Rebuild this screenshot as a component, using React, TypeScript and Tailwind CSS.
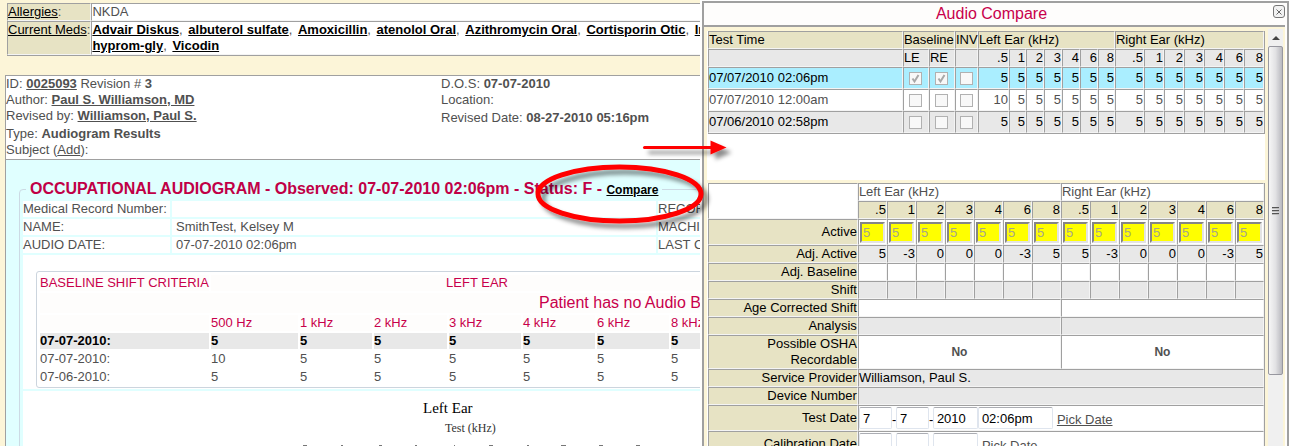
import React from "react";

const meds = [
  ["Advair Diskus", "albuterol sulfate", "Amoxicillin", "atenolol Oral", "Azithromycin Oral", "Cortisporin Otic", "In"],
  ["hyprom-gly", "Vicodin"],
];

const freqs = [".5", "1", "2", "3", "4", "6", "8"];
const bothEars = [...freqs, ...freqs];

const shiftRows = [
  { date: "07-07-2010:", values: ["5", "5", "5", "5", "5", "5", "5"], current: true },
  { date: "07-07-2010:", values: ["10", "5", "5", "5", "5", "5", "5"], current: false },
  { date: "07-06-2010:", values: ["5", "5", "5", "5", "5", "5", "5"], current: false },
];

const tests = [
  { time: "07/07/2010 02:06pm", baseline: true, first: "5", look: "bg-[#aaeeff] text-black" },
  { time: "07/07/2010 12:00am", baseline: false, first: "10", look: "bg-white text-[#505050]" },
  { time: "07/06/2010 02:58pm", baseline: false, first: "5", look: "bg-[#e8e8e8] text-black" },
];

const adjusted = ["5", "-3", "0", "0", "0", "-3", "5", "5", "-3", "0", "0", "0", "-3", "5"];

const cell = "border border-t-[#a0a0a0] border-l-[#a0a0a0] border-r-[#f4f4f4] border-b-[#f4f4f4] p-0 font-normal";
const label = cell + " bg-[#e7e3c4] text-right";
const table = "w-full table-fixed border-separate border-spacing-0 border-r border-[#a0a0a0] text-black";
const field =
  "h-[22px] rounded-[2px] border border-[#dfe5ee] border-t-[#abadb3] bg-white px-[3px] text-[13px] text-black outline-none";

function Meds({ names }: { names: string[] }) {
  return (
    <>
      {names.map((name, i) => (
        <React.Fragment key={name}>
          <a href="#" className="font-bold text-black underline">
            {name}
          </a>
          {i < names.length - 1 && <span className="mr-[2px]">, </span>}
        </React.Fragment>
      ))}
    </>
  );
}

function PatientHeader() {
  return (
    <table className="mt-[3px] ml-[7px] border-separate border-spacing-0 border-b border-[#a0a0a0] whitespace-nowrap">
      <tbody>
        <tr>
          <th className={cell + " w-[84px] bg-[#e7e3c4] text-left"}>
            <a href="#" className="text-black underline">Allergies</a>:
          </th>
          <td className={cell + " min-w-[700px] bg-white"}>NKDA</td>
        </tr>
        <tr>
          <th className={cell + " bg-[#e7e3c4] text-left align-top"}>
            <a href="#" className="text-black underline">Current Meds</a>:
          </th>
          <td className={cell + " bg-white"}>
            <Meds names={meds[0]} />
            <br />
            <Meds names={meds[1]} />
          </td>
        </tr>
      </tbody>
    </table>
  );
}

function RecordInfo() {
  return (
    <section className="grid grid-cols-[435px_1fr] border-y border-[#a0a0a0] bg-white pb-px whitespace-nowrap">
      <div>
        <p>ID: <a href="#" className="font-bold underline">0025093</a> Revision # <b>3</b></p>
        <p>Author: <a href="#" className="font-bold underline">Paul S. Williamson, MD</a></p>
        <p>Revised by: <a href="#" className="font-bold underline">Williamson, Paul S.</a></p>
        <p className="mt-[2px]">Type: <b>Audiogram Results</b></p>
        <p>Subject (<a href="#" className="underline">Add</a>):</p>
      </div>
      <div>
        <p>D.O.S: <b>07-07-2010</b></p>
        <p>Location:</p>
        <p className="mt-[2px]">Revised Date: <b>08-27-2010 05:16pm</b></p>
      </div>
    </section>
  );
}

function ShiftCriteria() {
  const tint = "bg-[#fefdfc] font-normal text-[#c8004b] p-0";
  return (
    <div className="w-max rounded-[3px] border border-[#ccd5de] px-px pt-px">
      <table className="w-[707px] table-fixed border-separate border-spacing-[2px] text-left">
        <colgroup>
          <col className="w-[169px]" />
          <col className="w-[87px]" />
          <col className="w-[72px]" />
          <col className="w-[73px]" />
          <col className="w-[72px]" />
          <col className="w-[72px]" />
          <col className="w-[72px]" />
          <col className="w-[72px]" />
        </colgroup>
        <thead>
          <tr>
            <th className={tint}>BASELINE SHIFT CRITERIA</th>
            <th colSpan={7} className={tint + " text-center"}>LEFT EAR</th>
          </tr>
          <tr>
            <th colSpan={8} className={tint + " pl-[499px] text-base leading-5"}>Patient has no Audio Baseline</th>
          </tr>
          <tr>
            <th className={tint}></th>
            {["500 Hz", "1 kHz", "2 kHz", "3 kHz", "4 kHz", "6 kHz", "8 kHz"].map((h) => (
              <th key={h} className={tint}>{h}</th>
            ))}
          </tr>
        </thead>
        <tbody>
          {shiftRows.map((row, i) => (
            <tr key={i} className={row.current ? "bg-[#e8e8e8] font-bold text-black" : ""}>
              <td className="p-0">{row.date}</td>
              {row.values.map((v, j) => (
                <td key={j} className="p-0">{v}</td>
              ))}
            </tr>
          ))}
        </tbody>
      </table>
    </div>
  );
}

function Audiogram() {
  const rows = [
    ["Medical Record Number:", "", "RECORD"],
    ["NAME:", "SmithTest, Kelsey M", "MACHINE"],
    ["AUDIO DATE:", "07-07-2010 02:06pm", "LAST CAL"],
  ];
  return (
    <section className="flex-1 bg-[#e0ffff] pt-[19px] pl-[13px] whitespace-nowrap">
      <fieldset className="w-max min-w-full rounded-[4px] border border-[#ccdae4] pt-[2px] pl-[3px]">
        <legend className="ml-[3px] px-1 text-base leading-5 font-bold text-[#c00046]">
          OCCUPATIONAL AUDIOGRAM - Observed: 07-07-2010 02:06pm - Status: F -{" "}
          <a href="#" className="text-xs text-black underline">Compare</a>
        </legend>
        <div className="grid grid-cols-[147px_484px_1fr] gap-[2px] *:bg-white">
          {rows.flat().map((text, i) => (
            <div key={i} className={i % 3 === 1 ? "h-4 pl-1" : "h-4"}>{text}</div>
          ))}
        </div>
        <div className="mt-[2px] bg-white pt-4 pb-px pl-[13px]">
          <ShiftCriteria />
        </div>
        <div className="mt-[2px] h-[400px] bg-white pt-[9px] font-['Liberation_Serif',serif]">
          <h2 className="pl-[400px] text-[15px] leading-4 text-black">Left Ear</h2>
          <p className="mt-1 pl-[422px] text-xs leading-4 text-[#333]">Test (kHz)</p>
          <svg width="360" height="2" className="mt-[9px] ml-[277px] block" aria-hidden="true">
            <path
              d="M3 .5h4M41 .5h2M79 .5h3M115 .5h2M154 .5h1M189 .5h4M227 .5h2M261 .5h5M299 .5h4M336 .5h4"
              stroke="#777"
            />
          </svg>
        </div>
      </fieldset>
    </section>
  );
}

function Tick({ name, checked }: { name: string; checked: boolean }) {
  return (
    <span className="mx-auto grid size-[13px]">
      <input
        type="checkbox"
        aria-label={name}
        checked={checked}
        readOnly
        disabled
        className="col-start-1 row-start-1 size-[13px] appearance-none border border-[#b1b1b1] bg-[#f8f8f8]"
      />
      {checked && (
        <svg viewBox="0 0 13 13" className="z-10 col-start-1 row-start-1 size-[13px]" aria-hidden="true">
          <path d="M3.5 6.5 5.5 9.5 9.5 3" fill="none" stroke="#a8a8a8" strokeWidth="2" />
        </svg>
      )}
    </span>
  );
}

function TestList() {
  return (
    <table className={table + " border-b"}>
      <colgroup>
        <col />
        <col className="w-[26px]" />
        <col className="w-[26px]" />
        <col className="w-[23px]" />
        <col className="w-[31px]" />
        <col className="w-[17px]" />
        <col className="w-[18px]" />
        <col className="w-[18px]" />
        <col className="w-[18px]" />
        <col className="w-[18px]" />
        <col className="w-[17px]" />
        <col className="w-[29px]" />
        <col className="w-[20px]" />
        <col className="w-[20px]" />
        <col className="w-[20px]" />
        <col className="w-[20px]" />
        <col className="w-[20px]" />
        <col className="w-[20px]" />
      </colgroup>
      <thead>
        <tr className="bg-[#e7e3c4] text-left whitespace-nowrap">
          <th className={cell}>Test Time</th>
          <th colSpan={2} className={cell}>Baseline</th>
          <th className={cell}>INV</th>
          <th colSpan={7} className={cell}>Left Ear (kHz)</th>
          <th colSpan={7} className={cell}>Right Ear (kHz)</th>
        </tr>
        <tr className="bg-[#e8e8e8]">
          <th className={cell}></th>
          <th className={cell + " text-left"}>LE</th>
          <th className={cell + " text-left"}>RE</th>
          <th className={cell}></th>
          {bothEars.map((f, i) => (
            <th key={i} className={cell + " text-right"}>{f}</th>
          ))}
        </tr>
      </thead>
      <tbody>
        {tests.map((t) => (
          <tr key={t.time} className={t.look}>
            <td className={cell + " h-[22px]"}>{t.time}</td>
            <td className={cell}><Tick name={"Left ear baseline " + t.time} checked={t.baseline} /></td>
            <td className={cell}><Tick name={"Right ear baseline " + t.time} checked={t.baseline} /></td>
            <td className={cell}><Tick name={"Invalid " + t.time} checked={false} /></td>
            {bothEars.map((_, i) => (
              <td key={i} className={cell + " text-right"}>{i === 0 ? t.first : "5"}</td>
            ))}
          </tr>
        ))}
      </tbody>
    </table>
  );
}

function DateFields({ name, values, time }: { name: string; values: string[]; time?: string }) {
  return (
    <div className="flex h-6 items-center">
      <input aria-label={name + " month"} defaultValue={values[0]} className={field + " w-[33px]"} />
      <span className="w-1 pt-1">-</span>
      <input aria-label={name + " day"} defaultValue={values[1]} className={field + " w-[33px]"} />
      <span className="w-1 pt-1">-</span>
      <input aria-label={name + " year"} defaultValue={values[2]} className={field + " w-[45px]"} />
      {time && <input aria-label={name + " time"} defaultValue={time} className={field + " w-[75px]"} />}
      <a href="#" className="ml-1 pt-1 text-[#505050] underline">Pick Date</a>
    </div>
  );
}

function Details() {
  return (
    <table className={table}>
      <colgroup>
        <col />
        {bothEars.map((_, i) => (
          <col key={i} className="w-[29px]" />
        ))}
      </colgroup>
      <tbody>
        <tr className="text-left text-[#505050]">
          <td rowSpan={2} className={cell + " bg-white"}></td>
          <th colSpan={7} className={cell + " bg-white"}>Left Ear (kHz)</th>
          <th colSpan={7} className={cell + " bg-white"}>Right Ear (kHz)</th>
        </tr>
        <tr>
          {bothEars.map((f, i) => (
            <th key={i} className={label}>{f}</th>
          ))}
        </tr>
        <tr>
          <th className={label + " h-[26px]"}>Active</th>
          {bothEars.map((f, i) => (
            <td key={i} className={cell + " bg-white"}>
              <input
                aria-label={(i < 7 ? "Left " : "Right ") + f + " kHz"}
                defaultValue="5"
                disabled
                className="mx-px block h-[21px] w-[25px] border-2 border-t-[#858585] border-r-[#e3e3e3] border-b-[#e3e3e3] border-l-[#858585] bg-[#ffff00] px-px text-[13px] text-[#a5a58c]"
              />
            </td>
          ))}
        </tr>
        <tr className="bg-[#e8e8e8]">
          <th className={label}>Adj. Active</th>
          {adjusted.map((v, i) => (
            <td key={i} className={cell + " text-right"}>{v}</td>
          ))}
        </tr>
        <tr className="bg-white">
          <th className={label}>Adj. Baseline</th>
          {bothEars.map((_, i) => (
            <td key={i} className={cell}></td>
          ))}
        </tr>
        <tr className="bg-[#e8e8e8]">
          <th className={label}>Shift</th>
          {bothEars.map((_, i) => (
            <td key={i} className={cell}></td>
          ))}
        </tr>
        <tr className="bg-white">
          <th className={label}>Age Corrected Shift</th>
          <td colSpan={7} className={cell}></td>
          <td colSpan={7} className={cell}></td>
        </tr>
        <tr className="bg-[#e8e8e8]">
          <th className={label}>Analysis</th>
          <td colSpan={7} className={cell}></td>
          <td colSpan={7} className={cell}></td>
        </tr>
        <tr className="bg-white text-center text-[#505050]">
          <th className={label + " pl-8 text-black"}>Possible OSHA Recordable</th>
          <td colSpan={7} className={cell}><b className="text-xs">No</b></td>
          <td colSpan={7} className={cell}><b className="text-xs">No</b></td>
        </tr>
        <tr className="bg-[#e8e8e8]">
          <th className={label}>Service Provider</th>
          <td colSpan={14} className={cell}>Williamson, Paul S.</td>
        </tr>
        <tr className="bg-[#e8e8e8]">
          <th className={label}>Device Number</th>
          <td colSpan={14} className={cell}></td>
        </tr>
        <tr className="bg-white">
          <th className={label}>Test Date</th>
          <td colSpan={14} className={cell}>
            <DateFields name="Test date" values={["7", "7", "2010"]} time="02:06pm" />
          </td>
        </tr>
        <tr className="bg-white">
          <th className={label}>Calibration Date</th>
          <td colSpan={14} className={cell}>
            <DateFields name="Calibration date" values={["", "", ""]} />
          </td>
        </tr>
      </tbody>
    </table>
  );
}

function ScrollRail() {
  return (
    <div className="flex w-[15px] shrink-0 flex-col bg-[#f0f0f0]" aria-hidden="true">
      <div className="grid h-[17px] shrink-0 place-items-center">
        <svg width="8" height="4" viewBox="0 0 8 4">
          <path d="M0 4 4 0l4 4z" fill="#444" />
        </svg>
      </div>
      <div className="grid h-[79%] place-items-center rounded-[2px] border border-[#97979f] bg-linear-to-r from-[#f6f6f6] via-[#e2e2e4] to-[#b9b9bf]">
        <svg width="8" height="8" viewBox="0 0 8 8">
          <path d="M0 .5h7M0 3.5h7M0 6.5h7" stroke="#555" />
          <path d="M0 1.5h7M0 4.5h7M0 7.5h7" stroke="#bbb" />
        </svg>
      </div>
    </div>
  );
}

function ComparePanel() {
  return (
    <aside className="mt-px flex w-[587px] shrink-0 flex-col border-x-2 border-t-2 border-[#a0a0a0] bg-[#fefdfc]">
      <header className="mr-[2px] grid h-6 shrink-0 grid-cols-[1fr_auto_1fr] border-b-2 border-[#a0a0a0]">
        <h1 className="col-start-2 pr-1.5 text-base leading-[22px] text-[#c8004b]">Audio Compare</h1>
        <button
          type="button"
          aria-label="Close"
          className="mt-[2px] grid h-[13px] w-3 place-items-center justify-self-end rounded-[3px] border border-[#777] bg-[#f2f2f2]"
        >
          <svg width="6" height="6" viewBox="0 0 6 6">
            <path d="M.5.5l5 5M5.500.5l-5 5" stroke="#666" />
          </svg>
        </button>
      </header>
      <div className="mr-[2px] flex min-h-0 flex-1 gap-[3px] bg-[#fcf5d8] pr-[2px] pl-[3px]">
        <div className="min-w-0 flex-1 overflow-hidden pt-1">
          <div className="min-h-[149px] bg-white pl-px">
            <TestList />
          </div>
          <div className="mt-[3px] bg-white pl-px">
            <Details />
          </div>
        </div>
        <div className="flex pt-[2px]">
          <ScrollRail />
        </div>
      </div>
    </aside>
  );
}

function Annotations() {
  return (
    <svg className="pointer-events-none absolute top-0 left-0" width="740" height="240" aria-hidden="true">
      <defs>
        <filter id="soft" x="-10%" y="-40%" width="120%" height="200%">
          <feDropShadow dx="5" dy="5" stdDeviation="2" floodColor="#000" floodOpacity="0.45" />
        </filter>
      </defs>
      <g filter="url(#soft)">
        <ellipse cx="619.500" cy="194" rx="81.500" ry="27" fill="none" stroke="#ff0000" strokeWidth="5" />
        <path d="M644.500 147.500H712" stroke="#ff0000" strokeWidth="3" strokeLinecap="round" />
        <path d="M710.500 140.500 726.500 147.500 710.500 154.500z" fill="#ff0000" />
      </g>
    </svg>
  );
}

export default function App() {
  return (
    <div className="relative flex h-screen overflow-hidden bg-white font-['Liberation_Sans',Arial,sans-serif] text-[13px] leading-4 text-[#505050]">
      <main className="mr-[2px] flex min-w-0 flex-1 flex-col overflow-hidden bg-[#fcf5d8]">
        <PatientHeader />
        <div className="mt-[19px] ml-[5px] flex min-h-0 flex-1 flex-col border-l border-[#a0a0a0]">
          <RecordInfo />
          <Audiogram />
        </div>
      </main>
      <ComparePanel />
      <Annotations />
    </div>
  );
}
